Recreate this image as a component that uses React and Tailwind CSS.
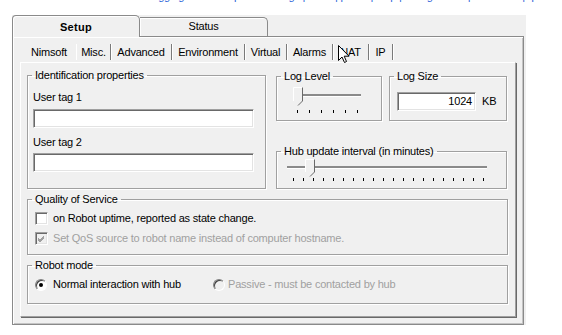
import React from 'react'

// Classic Win32 style dialog: Setup / Misc. page

function Group({ title, className, pad, children }) {
  return (
    <fieldset className={`border border-[#a0a0a0] shadow-[inset_1px_1px_0_#fff,1px_1px_0_#fff] ${className}`}>
      <legend className="ml-[4px] px-[3px] leading-[13px]">{title}</legend>
      <div className={pad}>{children}</div>
    </fieldset>
  )
}

function TextBox({ className, children }) {
  return (
    <div className={`bg-white border border-t-[#a0a0a0] border-l-[#a0a0a0] border-r-white border-b-white shadow-[inset_1px_1px_0_#696969,inset_-1px_-1px_0_#e3e3e3] ${className}`}>
      {children}
    </div>
  )
}

function Slider({ width, height, trackY, trackFrom, trackTo, thumbX, thumbTop, thumbBottom, ticks, tickY }) {
  const tw = 10
  const tipY = thumbBottom
  const shoulder = thumbBottom - 5
  return (
    <svg width={width} height={height} className="block">
      <rect x={trackFrom} y={trackY - 1} width={trackTo - trackFrom} height="2" fill="#8a8a8a" />
      <line x1={trackFrom} y1={trackY + 1.5} x2={trackTo} y2={trackY + 1.5} stroke="#fff" />
      <polygon
        points={`${thumbX},${thumbTop} ${thumbX + tw},${thumbTop} ${thumbX + tw},${shoulder} ${thumbX + tw / 2},${tipY} ${thumbX},${shoulder}`}
        fill="#f0f0f0"
      />
      <polyline
        points={`${thumbX + 0.5},${shoulder} ${thumbX + 0.5},${thumbTop + 0.5} ${thumbX + tw - 0.5},${thumbTop + 0.5}`}
        fill="none"
        stroke="#fff"
      />
      <polyline
        points={`${thumbX + tw - 0.5},${thumbTop + 0.5} ${thumbX + tw - 0.5},${shoulder} ${thumbX + tw / 2},${tipY - 0.5}`}
        fill="none"
        stroke="#696969"
      />
      {ticks.map((x) => (
        <line key={x} x1={x + 0.5} y1={tickY} x2={x + 0.5} y2={tickY + 3} stroke="#000" />
      ))}
    </svg>
  )
}

function CheckBox({ checked, disabled }) {
  return (
    <div className={`w-[13px] h-[13px] shrink-0 border border-t-[#a0a0a0] border-l-[#a0a0a0] border-r-white border-b-white shadow-[inset_1px_1px_0_#696969,inset_-1px_-1px_0_#e3e3e3] ${disabled ? 'bg-[#f0f0f0]' : 'bg-white'}`}>
      {checked && (
        <svg width="11" height="11" className="block">
          <path d="M2 5 L4 7 L8 3 M2 6 L4 8 L8 4 M2 7 L4 9 L8 5" fill="none" stroke={disabled ? '#a0a0a0' : '#000'} />
        </svg>
      )}
    </div>
  )
}

function Radio({ checked, disabled }) {
  return (
    <div className={`w-[12px] h-[12px] shrink-0 rounded-full border border-t-[#808080] border-l-[#808080] border-r-white border-b-white shadow-[inset_1px_1px_0_#404040] flex items-center justify-center ${disabled ? 'bg-[#f0f0f0]' : 'bg-white'}`}>
      {checked && <div className="w-[4px] h-[4px] rounded-full bg-black" />}
    </div>
  )
}

export default function App() {
  const innerTabs = [
    { label: 'Nimsoft', w: 'w-[54px]' },
    { label: 'Misc.', w: 'w-[35px]', selected: true },
    { label: 'Advanced', w: 'w-[61px]' },
    { label: 'Environment', w: 'w-[73px]' },
    { label: 'Virtual', w: 'w-[42px]' },
    { label: 'Alarms', w: 'w-[46px]' },
    { label: 'NAT', w: 'w-[36px]' },
    { label: 'IP', w: 'w-[24px]' },
  ]

  const levelTicks = [15, 27, 39, 51, 63, 75]
  const hubTicks = Array.from({ length: 20 }, (_, i) => 11 + i * 10)

  return (
    <div className="w-[562px] h-[335px] bg-white overflow-hidden relative font-['Liberation_Sans',Arial,sans-serif] text-[11px] tracking-[-0.2px] text-black">
      {/* clipped line of help text above the dialog */}
      <div className="h-[15px] overflow-hidden">
        <p className="mt-[-10px] pl-[150px] leading-[13px] text-[#2a63d8] whitespace-nowrap">
          logging and hub update settings | robot | probe | help | configuration | advanced | q
        </p>
      </div>

      <div className="ml-[12px] w-[514px] h-[310px] bg-[#f0f0f0] flex flex-col">
        {/* outer tabs */}
        <div className="flex items-end h-[21px]">
          <div className="relative z-10 -mb-px w-[128px] h-[22px] bg-[#f0f0f0] border border-b-0 border-[#8a8a8a] rounded-tl-[4px] rounded-tr-[5px] shadow-[inset_1px_1px_0_#fff] flex items-start justify-center pt-[5px] font-bold leading-[13px] tracking-[0.3px]">
            Setup
          </div>
          <div className="w-[128px] h-[19px] bg-[#f0f0f0] border border-l-0 border-b-0 border-[#8a8a8a] rounded-tr-[5px] shadow-[inset_1px_1px_0_#fff] flex items-start justify-center pt-[2px] leading-[13px]">
            Status
          </div>
        </div>

        {/* outer panel */}
        <div className="w-[512px] h-[289px] border border-[#8a8a8a] shadow-[inset_1px_1px_0_#fff,inset_-1px_-1px_0_#c4c4c4]">
          {/* inner tabs */}
          <div className="ml-[9px] mt-[5px] h-[20px] flex items-stretch">
            {innerTabs.map((t) => (
              <div
                key={t.label}
                className={`${t.w} flex items-center justify-center leading-[13px] my-[2px] ${t.label === 'Nimsoft' ? '' : 'border-r border-[#7a7a7a] shadow-[1px_0_0_#fff]'} ${t.selected ? 'border-l border-l-white' : ''}`}
              >
                {t.label}
              </div>
            ))}
          </div>

          {/* inner panel */}
          <div className="ml-[7px] w-[496px] h-[255px] border border-t-white border-l-white border-r-[#a0a0a0] border-b-[#a0a0a0] shadow-[1px_1px_0_#696969]">
            <div className="flex items-start mt-[6px] pl-[6px] gap-[10px]">
              <Group title="Identification properties" className="w-[239px] h-[120px]" pad="pl-[5px]">
                <div className="mt-[9px] leading-[13px]">User tag 1</div>
                <TextBox className="mt-[5px] w-[221px] h-[19px]" />
                <div className="mt-[8px] leading-[13px]">User tag 2</div>
                <TextBox className="mt-[4px] w-[221px] h-[19px]" />
              </Group>

              <div className="w-[231px] flex flex-col mt-[1px]">
                <div className="flex">
                  <Group title="Log Level" className="w-[106px] h-[51px]" pad="pl-[5px] pt-[2px]">
                    <Slider width={85} height={30} trackY={10} trackFrom={11} trackTo={79} thumbX={11} thumbTop={2} thumbBottom={21} ticks={levelTicks} tickY={25} />
                  </Group>
                  <Group title="Log Size" className="ml-[7px] w-[118px] h-[51px]" pad="pl-[7px] pt-[9px]">
                    <div className="flex items-center">
                      <TextBox className="w-[79px] h-[19px] flex items-center justify-end pr-[3px] leading-[13px]">1024</TextBox>
                      <span className="ml-[6px] leading-[13px]">KB</span>
                    </div>
                  </Group>
                </div>
                <Group title="Hub update interval (in minutes)" className="mt-[24px] w-[231px] h-[44px]" pad="pl-[5px] -mt-px">
                  <Slider width={215} height={26} trackY={10} trackFrom={5} trackTo={205} thumbX={23} thumbTop={2} thumbBottom={20} ticks={hubTicks} tickY={21} />
                </Group>
              </div>
            </div>

            <Group title="Quality of Service" className="ml-[6px] mt-[4px] w-[481px] h-[62px]" pad="pl-[7px]">
              <div className="mt-[6px] flex items-center gap-[5px] leading-[13px]">
                <CheckBox />
                <span>on Robot uptime, reported as state change.</span>
              </div>
              <div className="mt-[7px] flex items-center gap-[5px] leading-[13px] text-[#a0a0a0]">
                <CheckBox checked disabled />
                <span>Set QoS source to robot name instead of computer hostname.</span>
              </div>
            </Group>

            <Group title="Robot mode" className="ml-[6px] mt-[4px] w-[481px] h-[45px]" pad="pl-[7px]">
              <div className="mt-[6px] flex items-center leading-[13px]">
                <div className="w-[178px] flex items-center gap-[6px]">
                  <Radio checked />
                  <span>Normal interaction with hub</span>
                </div>
                <div className="flex items-center gap-[3px] text-[#a0a0a0]">
                  <Radio disabled />
                  <span>Passive - must be contacted by hub</span>
                </div>
              </div>
            </Group>
          </div>
        </div>
      </div>

      {/* mouse pointer over the NAT tab */}
      <svg width="13" height="20" className="absolute left-[338px] top-[45px]">
        <path d="M0.5 0.5 L0.5 15.5 L4 12 L6.5 17.5 L8.5 16.5 L6.2 11.2 L11 11.2 Z" fill="#fff" stroke="#000" strokeLinejoin="round" />
      </svg>
    </div>
  )
}
